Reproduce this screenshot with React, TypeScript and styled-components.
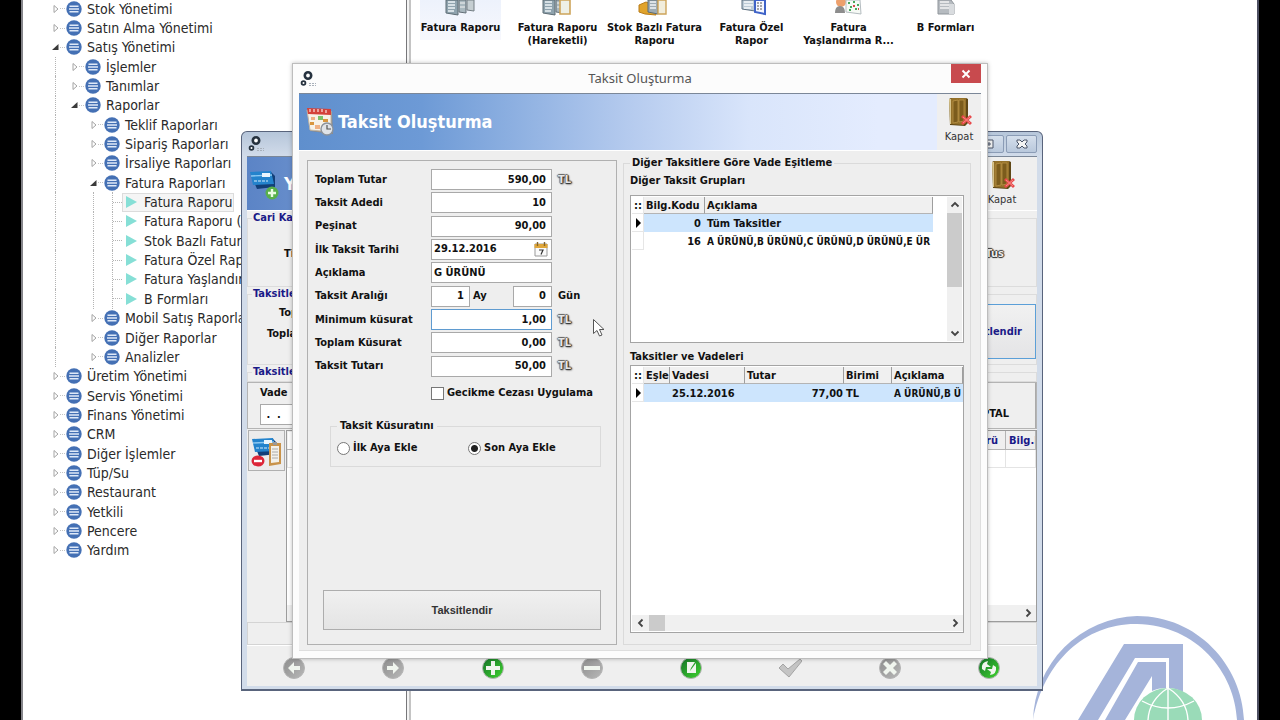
import React, { useState } from "react";
import styled, { createGlobalStyle, css } from "styled-components";

const GlobalStyle = createGlobalStyle`
  * { box-sizing: border-box; }
  body {
    margin: 0;
    background: #000;
    color: #111;
    font: bold 11px/14px "DejaVu Sans Condensed", "DejaVu Sans", sans-serif;
  }
  button, input { font: inherit; color: inherit; }
  button { padding: 0; cursor: default; }
`;

/* ---------- main screen ---------- */

const Screen = styled.div`
  position: relative;
  height: 100vh;
  overflow: hidden;
  padding: 0 21px;
`;

const Workspace = styled.div`
  display: flex;
  height: 100%;
  background: #fff;
  border-left: 2px solid #85858a;
  border-right: 2px solid #4c4e60;
`;

const Sidebar = styled.nav`
  flex: none;
  width: 384px;
  overflow: hidden;
  padding-left: 26px;
  border-right: 1px solid #77777a;
`;

const Splitter = styled.div`
  flex: none;
  width: 4px;
  background: #f4f4f4;
  border-right: 2px solid #c4c4c4;
`;

const ReportPane = styled.main`
  flex: 1;
  min-width: 0;
`;

/* ---------- tree ---------- */

const Tree = styled.ul`
  display: grid;
  grid-auto-rows: 1fr;
  height: 561px;
  margin: -1px 0 0;
  padding: 0;
  list-style: none;
`;

const TreeRow = styled.li`
  display: flex;
  align-items: center;
  font-size: 14px;
  font-weight: normal;
  line-height: 18px;
  white-space: nowrap;
  color: #2a2a2a;
`;

const Guide = styled.span<{ $on: boolean }>`
  flex: none;
  align-self: stretch;
  width: 19px;
  padding-left: 6px;
  &::before {
    content: "";
    display: block;
    height: 100%;
    border-left: 1px dotted ${(p) => (p.$on ? "#b4b4b4" : "transparent")};
  }
`;

const Expander = styled.span`
  flex: none;
  display: flex;
  align-items: center;
  width: 16px;
  padding-left: 2px;
  &::after {
    content: "";
    flex: 1;
    border-top: 1px dotted #c4c4c4;
  }
`;

const LeafLine = styled.span`
  flex: none;
  align-self: stretch;
  display: flex;
  align-items: center;
  width: 16px;
  padding-left: 6px;
  &::before {
    content: "";
    align-self: stretch;
    border-left: 1px dotted #b4b4b4;
  }
  &::after {
    content: "";
    flex: 1;
    border-top: 1px dotted #b4b4b4;
  }
`;

const Node = styled.button<{ $selected?: boolean }>`
  display: flex;
  align-items: center;
  gap: 5px;
  height: 19px;
  border: 1px solid ${(p) => (p.$selected ? "#dcdcdc" : "transparent")};
  background: ${(p) => (p.$selected ? "#f5f5f5" : "none")};
`;

type Item = { level: number; text: string; open?: boolean; leaf?: boolean };

const items: Item[] = [
  { level: 0, text: "Stok Yönetimi" },
  { level: 0, text: "Satın Alma Yönetimi" },
  { level: 0, text: "Satış Yönetimi", open: true },
  { level: 1, text: "İşlemler" },
  { level: 1, text: "Tanımlar" },
  { level: 1, text: "Raporlar", open: true },
  { level: 2, text: "Teklif Raporları" },
  { level: 2, text: "Sipariş Raporları" },
  { level: 2, text: "İrsaliye Raporları" },
  { level: 2, text: "Fatura Raporları", open: true },
  { level: 3, text: "Fatura Raporu", leaf: true },
  { level: 3, text: "Fatura Raporu (", leaf: true },
  { level: 3, text: "Stok Bazlı Fatura", leaf: true },
  { level: 3, text: "Fatura Özel Rapor", leaf: true },
  { level: 3, text: "Fatura Yaşlandırma", leaf: true },
  { level: 3, text: "B Formları", leaf: true },
  { level: 2, text: "Mobil Satış Raporları" },
  { level: 2, text: "Diğer Raporlar" },
  { level: 2, text: "Analizler" },
  { level: 0, text: "Üretim Yönetimi" },
  { level: 0, text: "Servis Yönetimi" },
  { level: 0, text: "Finans Yönetimi" },
  { level: 0, text: "CRM" },
  { level: 0, text: "Diğer İşlemler" },
  { level: 0, text: "Tüp/Su" },
  { level: 0, text: "Restaurant" },
  { level: 0, text: "Yetkili" },
  { level: 0, text: "Pencere" },
  { level: 0, text: "Yardım" },
];

const Arrow = ({ open }: { open?: boolean }) => (
  <svg width="9" height="10" viewBox="0 0 9 10">
    {open ? (
      <path d="M7.5 2v6H1z" fill="#3a3a3a" />
    ) : (
      <path d="M3 1.500v7L7 5z" fill="#fff" stroke="#a4a4a4" />
    )}
  </svg>
);

const MenuDot = () => (
  <svg width="16" height="16" viewBox="0 0 16 16">
    <circle cx="8" cy="8" r="7.7" fill="#4470b4" />
    <path d="M3.5 5.2h9M3 8h10M3.5 10.800h9" stroke="#dfe9f8" strokeWidth="1.6" />
  </svg>
);

const Play = () => (
  <svg width="16" height="16" viewBox="0 0 16 16">
    <path d="M3 2l11 6-11 6z" fill="#86dfd6" />
  </svg>
);

/* ---------- report shortcuts ---------- */

const Shortcuts = styled.div`
  display: flex;
  padding-left: 1px;
`;

const Shortcut = styled.button<{ $hot?: boolean }>`
  display: flex;
  flex-direction: column;
  align-items: center;
  gap: 5px;
  align-self: flex-start;
  width: 97px;
  min-height: 40px;
  border: 0;
  background: ${(p) =>
    p.$hot ? "linear-gradient(#edf2fc, #f7f8fd) center / 81px 100% no-repeat" : "none"};
  line-height: 13px;
  white-space: pre;
`;

const ReportIcon = ({ kind }: { kind: number }) => (
  <svg width="36" height="16" viewBox="0 0 36 16">
    {kind < 2 && (
      <>
        <path d="M3 0h12v15l-12-2z" fill="#8fa3ae" stroke="#5d6c74" />
        <path d="M5 2h7M5 5h7M5 8h7M5 11h6" stroke="#eef5f8" strokeWidth="1.4" />
        <path d="M16 0h7v13l-7-1z" fill="#a9b8bf" stroke="#647078" />
        <path d="M17 3h5M17 7h5" stroke="#f3f3f3" />
        {kind === 0 ? (
          <path d="M24 0h7v11l-7-1z" fill="#c5ced2" stroke="#747e84" />
        ) : (
          <path d="M20 0h10v14H20z" fill="#eef0e6" stroke="#cda45a" strokeWidth="1.6" />
        )}
      </>
    )}
    {kind === 2 && (
      <>
        <path d="M2 5l7-3 10 4v9l-11-1-6-2z" fill="#e0a32c" stroke="#b97c18" />
        <path d="M11 0h10v14l-10-2z" fill="#9dabb4" stroke="#5d6c74" />
        <path d="M13 2h6M13 5h6M13 8h6" stroke="#f1f5f7" strokeWidth="1.4" />
        <path d="M21 0h8v14h-8z" fill="#f1eddc" stroke="#cda45a" strokeWidth="1.4" />
      </>
    )}
    {kind === 3 && (
      <>
        <path d="M8 0h13v11L8 9z" fill="#bccbd6" stroke="#5d7080" />
        <path d="M10 2h9M10 5h9M10 8h7" stroke="#f6fafc" strokeWidth="1.3" />
        <path d="M21 0h10v14l-10-2z" fill="#f5f7ff" stroke="#3f63c8" strokeWidth="2" />
        <path d="M23 3h6M23 6h6M23 9h6" stroke="#555" strokeDasharray="2 1" />
      </>
    )}
    {kind === 4 && (
      <>
        <circle cx="10" cy="2" r="5" fill="#eda06c" />
        <path d="M4 13q0-7 5-7t5 7z" fill="#8d8d8d" />
        <path d="M15 0h14l1 14-15-2z" fill="#f6faf5" stroke="#b4bcc0" />
        <path d="M17 3h2M22 2h2M26 5h2M19 7h2M24 9h2M18 10h2" stroke="#48a85a" strokeWidth="2" />
        <path d="M22 6h2M27 9h1" stroke="#d64848" strokeWidth="2" />
      </>
    )}
    {kind === 5 && (
      <>
        <path d="M10 0h13l3 4v10H10z" fill="#b6bbc0" stroke="#8f959b" />
        <path d="M12 2h9M12 5h9M12 8h9" stroke="#f2f2f2" strokeWidth="1.4" />
        <path d="M21 4h5v10h-5z" fill="#d9dcdf" />
      </>
    )}
  </svg>
);

const shortcuts = [
  "Fatura Raporu",
  "Fatura Raporu\n(Hareketli)",
  "Stok Bazlı Fatura\nRaporu",
  "Fatura Özel\nRapor",
  "Fatura\nYaşlandırma R...",
  "B Formları",
];

const Brand = styled.svg`
  position: absolute;
  right: 20px;
  bottom: 0;
`;

/* ---------- background window ---------- */

const BackWindow = styled.section`
  position: absolute;
  left: 241px;
  top: 131px;
  width: 802px;
  padding: 0 5px 3px;
  background: linear-gradient(#b6c6da, #d2dcea 25px);
  border: 1px solid #59647c;
  border-bottom-width: 2px;
  border-radius: 6px 6px 0 0;
`;

const BackTitle = styled.header`
  display: flex;
  align-items: center;
  justify-content: space-between;
  height: 24px;
`;

const WindowButtons = styled.div`
  display: flex;
  gap: 2px;
`;

const FrameButton = styled.button`
  display: grid;
  place-items: center;
  width: 31px;
  height: 18px;
  border: 1px solid #8b9cb6;
  border-radius: 2px;
  background: linear-gradient(#d5dfec, #b9c8dc);
`;

const Banner = styled.div<{ $strong?: boolean }>`
  display: flex;
  align-items: center;
  justify-content: space-between;
  height: ${(p) => (p.$strong ? 55 : 58)}px;
  padding-left: ${(p) => (p.$strong ? 2 : 7)}px;
  border-top: 1px solid #7b8798;
  border-bottom: 1px solid #fff;
  background: ${(p) =>
    p.$strong
      ? "linear-gradient(90deg, #5b84c6, #e3ebfd 70%)"
      : "linear-gradient(90deg, #5f8fcd, #6d9ad6 18%, #b4caee 48%, #d9e5fb 66%, #e4ecfe 85%)"};
`;

const BannerTitle = styled.h1`
  display: flex;
  align-items: center;
  gap: 4px;
  margin: 0;
  font-size: 18px;
  line-height: 24px;
  color: #fff;
`;

const CloseDoor = styled.button<{ $wide?: boolean }>`
  display: flex;
  flex-direction: column;
  align-items: center;
  gap: 2px;
  width: ${(p) => (p.$wide ? 70 : 44)}px;
  height: 100%;
  padding-top: 2px;
  border: 0;
  background: #efefef;
  font-weight: normal;
  font-size: 11px;
  color: #333;
`;

const BackBody = styled.div`
  display: flex;
  flex-direction: column;
  background: #efefef;
  color: #111;
`;

const BackGroup = styled.fieldset<{ $h: number }>`
  display: flex;
  align-items: flex-start;
  justify-content: space-between;
  min-width: 0;
  height: ${(p) => p.$h}px;
  margin: 0;
  padding: 0;
  border: 1px solid #dcdcdc;
  legend {
    margin-left: 4px;
    padding: 0 1px;
    color: #1a1a88;
  }
`;

const BackLabels = styled.div<{ $top: number }>`
  display: flex;
  flex-direction: column;
  gap: 7px;
  padding-top: ${(p) => p.$top}px;
`;

const BackLabel = styled.span<{ $indent: number }>`
  padding-left: ${(p) => p.$indent}px;
`;

const Status = styled.span`
  padding: 22px 32px 0 0;
  color: #eee;
  text-shadow: 1px 0 1px #222, -1px 0 1px #333, 0 1px 1px #222, 0 -1px 1px #444;
`;

const BackButton = styled.button`
  width: 120px;
  height: 55px;
  margin: 3px 0 0;
  padding-right: 13px;
  text-align: right;
  border: 1px solid #5b9fd8;
  background: linear-gradient(#f1f1f1, #e4e4e6);
  color: #1a1a88;
`;

const EntryBar = styled.div`
  display: flex;
  justify-content: space-between;
  height: 47px;
  border: 1px solid #b4b4b4;
`;

const EntryField = styled.label`
  display: flex;
  flex-direction: column;
  gap: 4px;
  padding: 3px 0 0 12px;
`;

const CancelButton = styled.button`
  width: 110px;
  padding: 16px 26px 0 0;
  text-align: right;
  border: 0;
  border-right: 1px solid #aaa;
  background: #efefef;
`;

const BackListArea = styled.div`
  display: flex;
  height: 193px;
  padding: 1px 0 0 1px;
`;

const DeleteButton = styled.button`
  flex: none;
  display: grid;
  place-items: center;
  width: 37px;
  height: 41px;
  margin-right: 1px;
  border: 1px solid #b0b0b0;
  background: #ececec;
`;

const BackGrid = styled.div`
  flex: 1;
  display: flex;
  flex-direction: column;
  justify-content: space-between;
  border: 1px solid #9c9c9c;
  background: #fff;
`;

const BackTable = styled.table`
  width: 100%;
  border-collapse: collapse;
  table-layout: fixed;
  th, td {
    height: 18px;
    padding: 0 7px;
    border: 1px solid #e4e4e4;
    overflow: hidden;
    white-space: nowrap;
    text-align: right;
  }
  th {
    background: #efefef;
    color: #1a1a88;
    border-color: #efefef #b4b4b4 #b4b4b4 #efefef;
  }
  th:first-child, td:first-child { width: 14px; padding: 0 1px; background: #fff; color: #111; }
  th:last-child { width: 30px; text-align: left; padding: 0 0 0 3px; }
`;

const Spacer = styled.div`
  height: 23px;
  border: 1px solid #d4d4d4;
`;

const Navigator = styled.div`
  display: flex;
  justify-content: space-between;
  align-items: center;
  height: 41px;
  padding: 3px 36px 0 35px;
  border-top: 1px solid #fff;
`;

const NavButton = styled.button`
  display: grid;
  place-items: center;
  width: 24px;
  height: 24px;
  border: 0;
  background: none;
`;

/* ---------- dialog ---------- */

const Dialog = styled.section`
  position: absolute;
  left: 292px;
  top: 63px;
  width: 696px;
  padding: 0 6px 7px;
  background: #fcfcfc;
  border: 1px solid #bdbdbd;
  box-shadow: 0 0 4px rgba(0, 0, 0, 0.25);
`;

const DialogTitle = styled.header`
  display: grid;
  grid-template-columns: 30px 1fr 30px;
  height: 29px;
  text-align: center;
  > svg { align-self: center; }
`;

const DialogName = styled.h2`
  margin: 0;
  font: normal 13px/29px "Noto Sans", sans-serif;
  color: #555;
`;

const CloseButton = styled.button`
  display: grid;
  place-items: center;
  width: 30px;
  height: 19px;
  border: 0;
  background: #c84a4e;
`;

const DialogBody = styled.div`
  display: grid;
  grid-template-columns: 310px 1fr;
  gap: 6px;
  padding: 9px 9px 5px 8px;
  background: #eee;
  border: solid #dedede;
  border-width: 0 1px 1px 0;
`;

const FormPanel = styled.form`
  display: flex;
  flex-direction: column;
  height: 485px;
  padding: 7px 15px 14px 7px;
  border: 1px solid #b0b0b0;
`;

const Fields = styled.div`
  display: grid;
  grid-auto-rows: 1fr;
  height: 210px;
`;

const Field = styled.div`
  display: grid;
  grid-template-columns: 116px 121px 1fr;
  align-items: center;
`;

const box = css`
  height: 21px;
  border: 1px solid #a9a9a9;
  background: #fff;
  color: #111;
`;

const TextBox = styled.input<{ $right?: boolean; $w?: number }>`
  ${box}
  width: ${(p) => (p.$w ? `${p.$w}px` : "100%")};
  min-width: 0;
  padding: 0 ${(p) => (p.$right ? 5 : 2)}px 1px 2px;
  text-align: ${(p) => (p.$right ? "right" : "left")};
  border-radius: 0;
  outline: 0;
  &[data-active="true"] { border-color: #5f9bd0; }
`;

const DateBox = styled.div`
  ${box}
  display: flex;
  align-items: center;
  padding-right: 3px;
  input { flex: 1; min-width: 0; border: 0; padding: 0 2px 1px; background: none; outline: 0; }
  button { display: grid; border: 0; background: none; }
`;

const Interval = styled.div`
  display: flex;
  align-items: center;
  gap: 3px;
  input:last-child { margin-left: auto; }
`;

const Unit = styled.span`
  padding-left: 6px;
`;

const Currency = styled.span`
  padding-left: 6px;
  color: #e6e6e6;
  text-shadow: 1px 0 1px #222, -1px 0 1px #777, 0 1px 1px #333, 0 -1px 1px #666, 1px 1px 2px #333;
`;

const Choice = styled.label`
  display: flex;
  align-items: center;
  gap: 3px;
  input {
    appearance: none;
    width: 13px;
    height: 13px;
    margin: 0;
    border: 1px solid #777;
    background: #fff;
  }
  input[type="radio"] { border-radius: 50%; }
  input[type="radio"]:checked { background: radial-gradient(#222 0 3px, #fff 4px); }
`;

const LateFee = styled.div`
  padding: 8px 0 0 116px;
`;

const Remainder = styled.fieldset`
  display: grid;
  grid-template-columns: 131px 1fr;
  margin: 19px 0 0 15px;
  padding: 8px 6px 11px;
  border: 1px solid #dadada;
  legend { padding: 0 3px; }
`;

const SubmitButton = styled.button`
  height: 40px;
  margin: auto 0 0 8px;
  border: 1px solid #adadad;
  background: linear-gradient(#f0f0f0, #e4e4e4);
  color: #333;
  font-family: "Liberation Sans", Arial, sans-serif;
`;

const VadePanel = styled.fieldset`
  min-width: 0;
  height: 489px;
  margin: -4px 0 0;
  padding: 4px 6px 10px;
  border: 1px solid #dadada;
  legend { padding: 0 2px; }
`;

const Caption = styled.h3<{ $top?: number; $bottom: number }>`
  margin: 0;
  padding: ${(p) => p.$top ?? 0}px 0 ${(p) => p.$bottom}px;
  font-size: 11px;
  line-height: 14px;
`;

const ListBox = styled.div<{ $h: number }>`
  display: flex;
  height: ${(p) => p.$h}px;
  padding: 1px 0 1px 1px;
  border: 1px solid #a4a4a4;
  background: #fff;
`;

const ListColumn = styled.div`
  flex: 1;
  min-width: 0;
  display: flex;
  flex-direction: column;
  justify-content: space-between;
`;

const DataTable = styled.table<{ $w: string }>`
  width: ${(p) => p.$w};
  border-collapse: separate;
  border-spacing: 0;
  table-layout: fixed;
  th, td {
    height: 18px;
    padding: 0 2px;
    overflow: hidden;
    white-space: nowrap;
    text-align: left;
    line-height: 15px;
  }
  th {
    height: 17px;
    background: #f0f0f0;
    border-right: 1px solid #9e9e9e;
    border-bottom: 1px solid #b4b4b4;
  }
  th:first-child, td:first-child {
    background: #fff;
    border-right: 1px solid #e6e6e6;
    border-bottom: 1px solid #e6e6e6;
  }
  th:last-child, td:last-child { padding-right: 0; }
  td svg { display: block; }
`;

const DataRow = styled.tr<{ $selected?: boolean }>`
  background: ${(p) => (p.$selected ? "#cde5fd" : "#fff")};
`;

const Num = styled.td<{ $gap: number }>`
  && { text-align: right; padding-right: ${(p) => p.$gap}px; }
`;

const Products = styled.td`
  font-size: 10px;
`;

const VScroll = styled.div`
  display: grid;
  grid-template-rows: 16px 74px 1fr 16px;
  flex: none;
  width: 15px;
  margin-right: 1px;
  background: #f0f0f0;
`;

const HScroll = styled.div<{ $thumb?: boolean }>`
  display: grid;
  grid-template-columns: ${(p) => (p.$thumb ? "17px 16px 1fr 17px" : "17px 1fr 17px")};
  height: 16px;
  background: #f0f0f0;
`;

const Thumb = styled.span`
  background: #cbcbcb;
`;

const ScrollButton = styled.button`
  display: grid;
  place-items: center;
  border: 0;
  background: none;
`;

const Pointer = styled.svg`
  position: absolute;
  left: 592px;
  top: 318px;
  pointer-events: none;
`;

/* ---------- drawings ---------- */

const chevrons = {
  up: "M1.500 6.500L5 3l3.500 3.500",
  down: "M1.500 3.500L5 7l3.500-3.500",
  left: "M6.500 1.500L3 5l3.500 3.500",
  right: "M3.500 1.500L7 5 3.500 8.500",
};

const Chevron = ({ to }: { to: keyof typeof chevrons }) => (
  <svg width="10" height="10" viewBox="0 0 10 10">
    <path d={chevrons[to]} fill="none" stroke="#444" strokeWidth="1.8" />
  </svg>
);

const Gears = () => (
  <svg width="18" height="18" viewBox="0 0 18 18">
    <circle cx="9" cy="5.5" r="3.2" fill="#fff" stroke="#26323f" strokeWidth="2.6" />
    <circle cx="4.500" cy="13" r="1.9" fill="#fff" stroke="#26323f" strokeWidth="1.8" />
    <path d="M10 13.500h7M10 15.500h7" stroke="#a8b0ba" strokeDasharray="2 1" />
  </svg>
);

const Door = () => (
  <svg width="28" height="32" viewBox="0 0 28 32">
    <path d="M4 3l2-1h15l2 1v24l-3 3-15-1z" fill="#5f4716" />
    <path d="M5 3l2-1h14v25l-3 2-12-1z" fill="#94712a" />
    <path d="M8 5l5-1v22l-5 1zM14 4l5 0v21l-5 1z" fill="#7c5c1c" stroke="#c09a4c" strokeWidth=".7" />
    <path d="M4 3h2v25H5z" fill="#d8c48c" />
    <path d="M17 20l9 8M26 20l-9 8" stroke="#e8484a" strokeWidth="3" />
    <path d="M18 21l7 6M25 21l-7 6" stroke="#f58a88" strokeWidth="1" />
  </svg>
);

const CalendarPicture = () => (
  <svg width="28" height="30" viewBox="0 0 28 30">
    <path d="M1 4l25 1 1 22-23-3z" fill="#8f8a84" />
    <path d="M1 3l24 1v21L4 23z" fill="#f7f2e8" stroke="#c0b6a6" />
    <path d="M1 1l24 1v6L2 7z" fill="#d4423a" />
    <path d="M4 2v3M8 2v3M12 2v3M16 2v3M20 3v3" stroke="#fbe3df" strokeWidth="1.2" />
    <path d="M5 10h4v3H5zM9 18h5v4H9z" fill="#efb184" />
    <path d="M12 9h5v4h-5z" fill="#7cc26a" />
    <path d="M17 12h5v3h-5zM4 15h4v3H4z" fill="#d8963e" />
    <circle cx="21" cy="22" r="6" fill="#dfe3e8" stroke="#8b929b" strokeWidth="1.4" />
    <path d="M21 18v4h4" fill="none" stroke="#555" strokeWidth="1.2" />
  </svg>
);

const DatePicture = () => (
  <svg width="14" height="15" viewBox="0 0 14 15">
    <path d="M1 2h12v12H1z" fill="#fafafa" stroke="#999" />
    <path d="M.5 2h13v4H.5z" fill="#e0a73a" />
    <path d="M3.5 0v4M10.500 0v4" stroke="#85652a" strokeWidth="1.4" />
    <path d="M5 8h4l-2 4.500" fill="none" stroke="#333" strokeWidth="1.2" />
  </svg>
);

const Cards = ({ mode }: { mode: "add" | "remove" }) => (
  <svg width="31" height="34" viewBox="0 0 31 34">
    <path d="M2 8l20-3 4 4v11L8 22z" fill="#123f78" />
    <path d="M1 5l21-1 3 13-21 1z" fill="#2383cc" />
    <path d="M2 9l21-1" stroke="#8dc9f2" strokeWidth="1.4" />
    <path d="M5 14h14" stroke="#d5ecfb" strokeDasharray="3 1" />
    <path d="M13 6h8v4h-8z" fill="#e9f5fd" />
    {mode === "add" ? (
      <>
        <circle cx="23" cy="26" r="6.500" fill="#58b04c" />
        <path d="M23 22v8M19 26h8" stroke="#eafbe4" strokeWidth="2.4" />
      </>
    ) : (
      <>
        <path d="M18 9h12v21l-12 2z" fill="#c9934a" />
        <path d="M20 12h8v16l-8 1z" fill="#f3f1ea" />
        <path d="M22 8h4v3h-4z" fill="#999" />
        <path d="M21 15h6M21 18h6M21 21h6M21 24h6" stroke="#aaa" />
        <ellipse cx="7" cy="27" rx="6.500" ry="5.500" fill="#dc2638" />
        <path d="M3 27h8" stroke="#fff" strokeWidth="2.4" />
      </>
    )}
  </svg>
);

const navShapes: { name: string; green?: boolean; plain?: boolean; d: string }[] = [
  { name: "Önceki", d: "M12 6l-6 6 6 6v-4h6v-4h-6z" },
  { name: "Sonraki", d: "M12 6l6 6-6 6v-4H6v-4h6z" },
  { name: "Ekle", green: true, d: "M10 5h4v5h5v4h-5v5h-4v-5H5v-4h5z" },
  { name: "Sil", d: "M4 10h16v4H4z" },
  { name: "Düzenle", green: true, d: "M8 6h8l-4 6-1 3 6-8v10H8z" },
  { name: "Onayla", plain: true, d: "M1 12l4-4 5 5L22 3l2 2-13 16z" },
  { name: "Vazgeç", d: "M8 5l4 4 4-4 3 3-4 4 4 4-3 3-4-4-4 4-3-3 4-4-4-4z" },
  { name: "Yenile", green: true, d: "M5 13q-1-7 6-8l-1 3 4 3-5 0-1 4zM19 11q1 7-6 8l1-3-4-3 5 0 1-4z" },
];

const NavIcon = ({ shape }: { shape: (typeof navShapes)[number] }) => (
  <svg width="24" height="24" viewBox="0 0 24 24">
    <defs>
      <linearGradient id={`nav-${shape.name}`} x1="0" y1="0" x2="1" y2="1">
        <stop offset="0" stopColor={shape.green ? "#15702a" : "#8c8c8c"} />
        <stop offset="1" stopColor={shape.green ? "#3fd62e" : "#b8b8b8"} />
      </linearGradient>
    </defs>
    {!shape.plain && (
      <circle cx="12" cy="12" r="10.500" fill={`url(#nav-${shape.name})`} stroke="#b5b5b5" />
    )}
    <path
      d={shape.d}
      fill={shape.plain ? "#c4c4c4" : "#f0f5ee"}
      stroke={shape.plain ? "#a4a4a4" : "none"}
    />
  </svg>
);

const Marker = () => (
  <svg width="8" height="10" viewBox="0 0 8 10">
    <path d="M2 0v10l5-5z" fill="#000" />
  </svg>
);

/* ---------- form ---------- */

const amounts: Record<string, string> = {
  "Toplam Tutar": "590,00",
  "Taksit Adedi": "10",
  Peşinat: "90,00",
  "Minimum küsurat": "1,00",
  "Toplam Küsurat": "0,00",
  "Taksit Tutarı": "50,00",
};

const AmountField = ({ label, tl, active }: { label: string; tl?: boolean; active?: boolean }) => {
  const [value, setValue] = useState(amounts[label]);
  return (
    <Field>
      <label htmlFor={label}>{label}</label>
      <TextBox
        id={label}
        $right
        data-active={active}
        value={value}
        onChange={(e) => setValue(e.target.value)}
      />
      {tl && <Currency>TL</Currency>}
    </Field>
  );
};

export default function App() {
  const [selected, setSelected] = useState("Fatura Raporu");
  return (
    <Screen>
      <GlobalStyle />
      <Workspace>
        <Sidebar aria-label="Menü">
          <Tree>
            {items.map((item) => (
              <TreeRow key={item.text}>
                {Array.from({ length: item.level }, (_, i) => (
                  <Guide key={i} $on={i !== 1} />
                ))}
                {item.leaf ? (
                  <LeafLine />
                ) : (
                  <Expander>
                    <Arrow open={item.open} />
                  </Expander>
                )}
                <Node $selected={item.text === selected} onClick={() => setSelected(item.text)}>
                  {item.leaf ? <Play /> : <MenuDot />}
                  {item.text}
                </Node>
              </TreeRow>
            ))}
          </Tree>
        </Sidebar>
        <Splitter />
        <ReportPane>
          <Shortcuts>
            {shortcuts.map((text, i) => (
              <Shortcut key={text} $hot={i === 0}>
                <ReportIcon kind={i} />
                {text}
              </Shortcut>
            ))}
          </Shortcuts>
        </ReportPane>
      </Workspace>

      <Brand width="228" height="105" viewBox="0 0 228 105">
        <path
          d="M1 105A107 107 0 0 1 105 1C165 1 210 50 212 105h-7C203 58 165 10 105 9C55 8 12 45 1 105z"
          fill="#a5b4da"
        />
        <path d="M92 29h59v48q-8-4-14-4V43h-34L66 105H46z" fill="#a5b4da" />
        <path d="M106 47h28v26q-8 0-14 3V61L93 105H73z" fill="#a5b4da" />
        <path d="M102 105a34 32 0 0 1 68 0z" fill="#9adbb8" />
        <path
          d="M136 73v32M136 73q-19 12-20 32M136 73q19 12 20 32M110 86q26 14 52 0"
          fill="none"
          stroke="#fff"
          strokeWidth="1.4"
        />
      </Brand>

      <BackWindow>
        <BackTitle>
          <Gears />
          <WindowButtons>
            <FrameButton aria-label="Önceki boyut">
              <svg width="12" height="12" viewBox="0 0 12 12">
                <path d="M2 2h8v8H2zM5 5h2v2H5z" fill="#eee" stroke="#4a5568" />
              </svg>
            </FrameButton>
            <FrameButton aria-label="Pencereyi kapat">
              <svg width="12" height="12" viewBox="0 0 12 12">
                <path
                  d="M1 2h3l2 2 2-2h3v2L9 6l2 2v2H8L6 8l-2 2H1V8l2-2-2-2z"
                  fill="#f4f4f4"
                  stroke="#4a5568"
                />
              </svg>
            </FrameButton>
          </WindowButtons>
        </BackTitle>
        <Banner $strong>
          <BannerTitle>
            <Cards mode="add" />Y
          </BannerTitle>
          <CloseDoor $wide>
            <Door />
            Kapat
          </CloseDoor>
        </Banner>
        <BackBody>
          <BackGroup $h={76}>
            <legend>Cari Kart</legend>
            <BackLabels $top={22}>
              <BackLabel $indent={36}>Tipi</BackLabel>
            </BackLabels>
            <Status>Tus</Status>
          </BackGroup>
          <BackGroup $h={78}>
            <legend>Taksitler</legend>
            <BackLabels $top={5}>
              <BackLabel $indent={31}>Top</BackLabel>
              <BackLabel $indent={19}>Toplam</BackLabel>
            </BackLabels>
            <BackButton>Taksitlendir</BackButton>
          </BackGroup>
          <BackGroup $h={17}>
            <legend>Taksitler</legend>
          </BackGroup>
          <EntryBar>
            <EntryField>
              <span>Vade</span>
              <TextBox $w={70} defaultValue=" .  ." />
            </EntryField>
            <CancelButton>İPTAL</CancelButton>
          </EntryBar>
          <BackListArea>
            <DeleteButton aria-label="Taksiti sil">
              <Cards mode="remove" />
            </DeleteButton>
            <BackGrid>
              <BackTable>
                <thead>
                  <tr>
                    <th>::</th>
                    <th>Türü</th>
                    <th>Bilg.K</th>
                  </tr>
                </thead>
                <tbody>
                  <tr>
                    <td>
                      <Marker />
                    </td>
                    <td />
                    <td />
                  </tr>
                </tbody>
              </BackTable>
              <HScroll>
                <ScrollButton aria-label="Sola kaydır">
                  <Chevron to="left" />
                </ScrollButton>
                <span />
                <ScrollButton aria-label="Sağa kaydır">
                  <Chevron to="right" />
                </ScrollButton>
              </HScroll>
            </BackGrid>
          </BackListArea>
          <Spacer />
          <Navigator>
            {navShapes.map((shape) => (
              <NavButton key={shape.name} aria-label={shape.name}>
                <NavIcon shape={shape} />
              </NavButton>
            ))}
          </Navigator>
        </BackBody>
      </BackWindow>

      <Dialog role="dialog" aria-labelledby="dialog-name">
        <DialogTitle>
          <Gears />
          <DialogName id="dialog-name">Taksit Oluşturma</DialogName>
          <CloseButton aria-label="Kapat">
            <svg width="10" height="10" viewBox="0 0 10 10">
              <path d="M1.500 1.500l7 7M8.500 1.500l-7 7" stroke="#fff" strokeWidth="2" />
            </svg>
          </CloseButton>
        </DialogTitle>
        <Banner>
          <BannerTitle>
            <CalendarPicture />
            Taksit Oluşturma
          </BannerTitle>
          <CloseDoor>
            <Door />
            Kapat
          </CloseDoor>
        </Banner>
        <DialogBody>
          <FormPanel onSubmit={(e) => e.preventDefault()}>
            <Fields>
              <AmountField label="Toplam Tutar" tl />
              <AmountField label="Taksit Adedi" />
              <AmountField label="Peşinat" />
              <Field>
                <label htmlFor="first-date">İlk Taksit Tarihi</label>
                <DateBox>
                  <input id="first-date" defaultValue="29.12.2016" />
                  <button type="button" aria-label="Tarih seç">
                    <DatePicture />
                  </button>
                </DateBox>
              </Field>
              <Field>
                <label htmlFor="note">Açıklama</label>
                <TextBox id="note" defaultValue="G ÜRÜNÜ" />
              </Field>
              <Field>
                <label htmlFor="months">Taksit Aralığı</label>
                <Interval>
                  <TextBox id="months" $right $w={39} defaultValue="1" />
                  <label htmlFor="months">Ay</label>
                  <TextBox id="days" $right $w={39} defaultValue="0" />
                </Interval>
                <Unit as="label" htmlFor="days">
                  Gün
                </Unit>
              </Field>
              <AmountField label="Minimum küsurat" tl active />
              <AmountField label="Toplam Küsurat" tl />
              <AmountField label="Taksit Tutarı" tl />
            </Fields>
            <LateFee>
              <Choice>
                <input type="checkbox" />
                Gecikme Cezası Uygulama
              </Choice>
            </LateFee>
            <Remainder>
              <legend>Taksit Küsuratını</legend>
              <Choice>
                <input type="radio" name="remainder" />
                İlk Aya Ekle
              </Choice>
              <Choice>
                <input type="radio" name="remainder" defaultChecked />
                Son Aya Ekle
              </Choice>
            </Remainder>
            <SubmitButton type="submit">Taksitlendir</SubmitButton>
          </FormPanel>
          <VadePanel>
            <legend>Diğer Taksitlere Göre Vade Eşitleme</legend>
            <Caption $bottom={7}>Diğer Taksit Grupları</Caption>
            <ListBox $h={148}>
              <ListColumn>
                <DataTable $w="301px">
                  <colgroup>
                    <col style={{ width: 12 }} />
                    <col style={{ width: 61 }} />
                    <col />
                  </colgroup>
                  <thead>
                    <tr>
                      <th>::</th>
                      <th>Bilg.Kodu</th>
                      <th>Açıklama</th>
                    </tr>
                  </thead>
                  <tbody>
                    <DataRow $selected>
                      <td>
                        <Marker />
                      </td>
                      <Num $gap={4}>0</Num>
                      <td>Tüm Taksitler</td>
                    </DataRow>
                    <DataRow>
                      <td />
                      <Num $gap={4}>16</Num>
                      <Products>A ÜRÜNÜ,B ÜRÜNÜ,C ÜRÜNÜ,D ÜRÜNÜ,E ÜR</Products>
                    </DataRow>
                  </tbody>
                </DataTable>
              </ListColumn>
              <VScroll>
                <ScrollButton type="button" aria-label="Yukarı kaydır">
                  <Chevron to="up" />
                </ScrollButton>
                <Thumb />
                <span />
                <ScrollButton type="button" aria-label="Aşağı kaydır">
                  <Chevron to="down" />
                </ScrollButton>
              </VScroll>
            </ListBox>
            <Caption $top={7} $bottom={1}>
              Taksitler ve Vadeleri
            </Caption>
            <ListBox $h={268}>
              <ListColumn>
                <DataTable $w="100%">
                  <colgroup>
                    <col style={{ width: 12 }} />
                    <col style={{ width: 26 }} />
                    <col style={{ width: 75 }} />
                    <col style={{ width: 99 }} />
                    <col style={{ width: 48 }} />
                    <col />
                  </colgroup>
                  <thead>
                    <tr>
                      <th>::</th>
                      <th>Eşle</th>
                      <th>Vadesi</th>
                      <th>Tutar</th>
                      <th>Birimi</th>
                      <th>Açıklama</th>
                    </tr>
                  </thead>
                  <tbody>
                    <DataRow $selected>
                      <td>
                        <Marker />
                      </td>
                      <td />
                      <td>25.12.2016</td>
                      <Num $gap={1}>77,00</Num>
                      <td>TL</td>
                      <Products>A ÜRÜNÜ,B Ü</Products>
                    </DataRow>
                  </tbody>
                </DataTable>
                <HScroll $thumb>
                  <ScrollButton type="button" aria-label="Sola kaydır">
                    <Chevron to="left" />
                  </ScrollButton>
                  <Thumb />
                  <span />
                  <ScrollButton type="button" aria-label="Sağa kaydır">
                    <Chevron to="right" />
                  </ScrollButton>
                </HScroll>
              </ListColumn>
            </ListBox>
          </VadePanel>
        </DialogBody>
      </Dialog>

      <Pointer width="14" height="20" viewBox="0 0 14 20">
        <path d="M1.500 1.500v14l3.500-3 2.500 5.500 2.500-1-2.500-5.500h4.500z" fill="#fff" stroke="#555" />
      </Pointer>
    </Screen>
  );
}
